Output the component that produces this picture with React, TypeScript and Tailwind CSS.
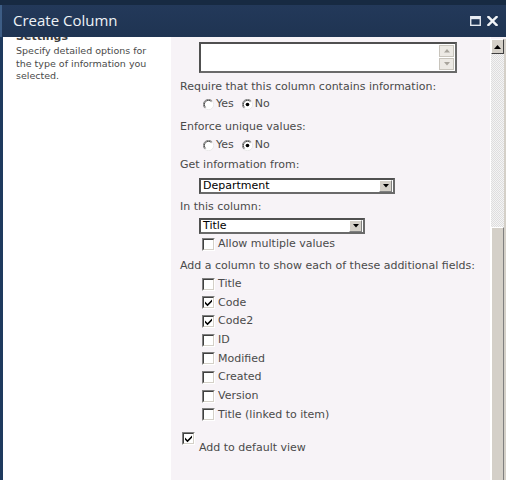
import React from 'react';

const font = "font-['DejaVu_Sans','Liberation_Sans',sans-serif]";

const Radio: React.FC<{ checked?: boolean }> = ({ checked }) => (
  <svg width="11" height="11" viewBox="0 0 12 12" className="shrink-0">
    <circle cx="6" cy="6" r="5.5" fill="#ffffff" />
    <path d="M10 2 A5.5 5.5 0 0 0 2 10" fill="none" stroke="#808080" strokeWidth="1" />
    <path d="M9.2 2.8 A4.5 4.5 0 0 0 2.8 9.2" fill="none" stroke="#404040" strokeWidth="1" />
    <path d="M2 10 A5.5 5.5 0 0 0 10 2" fill="none" stroke="#e8e8e8" strokeWidth="1" />
    {checked && <circle cx="6" cy="6" r="2" fill="#000000" />}
  </svg>
);

const Checkbox: React.FC<{ checked?: boolean }> = ({ checked }) => (
  <div className="w-[13px] h-[13px] shrink-0 border-t border-l border-t-[#808080] border-l-[#808080] border-b border-r border-b-white border-r-white bg-white">
    <div className="w-full h-full border-t border-l border-t-[#404040] border-l-[#404040] border-b border-r border-b-[#d4d0c8] border-r-[#d4d0c8] flex items-center justify-center">
      {checked && (
        <svg width="9" height="9" viewBox="0 0 9 9">
          <path d="M1 3.5 L3.5 6 L8 1.5 L8 3.8 L3.5 8.2 L1 5.7 Z" fill="#000000" />
        </svg>
      )}
    </div>
  </div>
);

const Select: React.FC<{ value: string; width: string }> = ({ value, width }) => (
  <div className={`${width} h-[16px] bg-white border-t-2 border-l-2 border-t-[#505050] border-l-[#505050] border-b-2 border-r-2 border-b-[#6a6a6a] border-r-[#6a6a6a] flex items-center`}>
    <span className="flex-1 pl-[2px] text-[11px] leading-[12px] text-black">{value}</span>
    <div className="w-[13px] h-[12px] mr-px bg-[#d4d0c8] border-t border-l border-t-white border-l-white border-b border-r border-b-[#808080] border-r-[#808080] flex items-center justify-center">
      <svg width="6" height="4" viewBox="0 0 6 4">
        <path d="M0 0 L6 0 L3 3.5 Z" fill="#000000" />
      </svg>
    </div>
  </div>
);

const Label: React.FC<{ children: React.ReactNode; className?: string }> = ({ children, className }) => (
  <div className={`h-[14px] leading-[14px] pl-[9px] text-[11px] text-[#4a4a4a] whitespace-nowrap ${className ?? ''}`}>{children}</div>
);

const CheckRow: React.FC<{ label: string; checked?: boolean }> = ({ label, checked }) => (
  <div className="h-[18.67px] flex items-center pl-[31px] gap-[3px] text-[11px] text-[#4a4a4a]">
    <Checkbox checked={checked} />
    <span>{label}</span>
  </div>
);

const RadioRow: React.FC = () => (
  <div className="h-[14px] flex items-center pl-[32px] text-[11px] text-[#4a4a4a]">
    <Radio />
    <span className="ml-[2px]">Yes</span>
    <span className="ml-[8px] flex"><Radio checked /></span>
    <span className="ml-[2px]">No</span>
  </div>
);

const fields = [
  { label: 'Title' },
  { label: 'Code', checked: true },
  { label: 'Code2', checked: true },
  { label: 'ID' },
  { label: 'Modified' },
  { label: 'Created' },
  { label: 'Version' },
  { label: 'Title (linked to item)' },
];

export default function App() {
  return (
    <div className={`w-[506px] h-[480px] overflow-hidden flex flex-col ${font}`}>
      {/* Title bar */}
      <div className="h-[37px] shrink-0 bg-[#172a42] pt-[5px]">
        <div className="h-[32px] bg-gradient-to-b from-[#23395a] to-[#1f3452] border-l-2 border-[#3d5d85] flex items-center pl-[11px] pr-[8px]">
          <span className="flex-1 text-[15px] text-[#eef2f6] font-['Open_Sans','DejaVu_Sans',sans-serif] pb-[2px]">Create Column</span>
          <div className="flex items-center gap-[6px]">
            <svg width="11" height="10" viewBox="0 0 12 11">
              <rect x="0.75" y="0.75" width="10.5" height="9.5" fill="none" stroke="#e6ebf2" strokeWidth="1.5" />
              <rect x="1" y="1" width="10" height="2.5" fill="#e6ebf2" />
            </svg>
            <svg width="11" height="10" viewBox="0 0 12 11">
              <path d="M1.5 1 L10.5 10 M10.5 1 L1.5 10" stroke="#f2f5f8" strokeWidth="2.6" strokeLinecap="square" />
            </svg>
          </div>
        </div>
      </div>

      {/* Body */}
      <div className="flex-1 flex overflow-hidden border-l-[3px] border-[#1e3a5e]">
        {/* Left description panel */}
        <div className="w-[168px] shrink-0 bg-white pl-[13px] overflow-hidden">
          <div className="-mt-[7px] text-[11px] leading-[14px] font-bold text-[#3c3c3c]">Settings</div>
          <div className="mt-[1px] w-[142px] text-[9.5px] leading-[12.6px] text-[#4a4a4a]">
            Specify detailed options for the type of information you selected.
          </div>
        </div>

        {/* Right form panel */}
        <div className="flex-1 bg-[#f7f3f7] overflow-hidden">
          <div className="mt-[5px] ml-[28px] w-[258px] h-[31px] bg-white border-t-2 border-l-2 border-t-[#505050] border-l-[#505050] border-b-2 border-r-2 border-b-[#6a6a6a] border-r-[#6a6a6a] flex justify-end">
            <div className="w-[15px] flex flex-col gap-[1px] py-[1px] mr-[1px]">
              <div className="flex-1 bg-[#ece9e4] border border-[#c8c4bc] flex items-center justify-center">
                <svg width="6" height="4" viewBox="0 0 6 4"><path d="M0 3.5 L6 3.5 L3 0 Z" fill="#a8a49c" /></svg>
              </div>
              <div className="flex-1 bg-[#ece9e4] border border-[#c8c4bc] flex items-center justify-center">
                <svg width="6" height="4" viewBox="0 0 6 4"><path d="M0 0 L6 0 L3 3.5 Z" fill="#a8a49c" /></svg>
              </div>
            </div>
          </div>

          <Label className="mt-[7px]">Require that this column contains information:</Label>
          <div className="mt-[3px]"><RadioRow /></div>

          <Label className="mt-[9px]">Enforce unique values:</Label>
          <div className="mt-[4px]"><RadioRow /></div>

          <Label className="mt-[6px]">Get information from:</Label>
          <div className="mt-[6px] ml-[28px]"><Select value="Department" width="w-[196px]" /></div>

          <Label className="mt-[6px]">In this column:</Label>
          <div className="mt-[4px] ml-[28px]"><Select value="Title" width="w-[166px]" /></div>

          <div className="mt-[3px] h-[14px] flex items-center pl-[31px] gap-[3px] text-[11px] text-[#4a4a4a]">
            <Checkbox />
            <span>Allow multiple values</span>
          </div>

          <Label className="mt-[8px]">Add a column to show each of these additional fields:</Label>
          <div className="mt-[2px]">
            {fields.map(f => (
              <CheckRow key={f.label} label={f.label} checked={f.checked} />
            ))}
          </div>

          <div className="mt-[8px] ml-[11px] flex items-start gap-[4px] text-[11px] text-[#4a4a4a]">
            <Checkbox checked />
            <span className="mt-[8px]">Add to default view</span>
          </div>
        </div>

        {/* Scrollbar */}
        <div className="w-[16px] shrink-0 flex flex-col border-l border-[#ffffff] bg-[#d4d0c8]">
          <div className="h-[2px] bg-[#f7f3f7]" />
          <div className="h-[15px] mr-[2px] bg-[#d4d0c8] border-t border-l border-t-white border-l-white border-b border-r border-b-[#404040] border-r-[#404040] flex items-center justify-center">
            <svg width="7" height="4" viewBox="0 0 7 4"><path d="M0 4 L7 4 L3.5 0 Z" fill="#000000" /></svg>
          </div>
          <div className="h-[173px] mr-[2px] bg-[image:repeating-conic-gradient(#dedede_0%_25%,#f4f4f4_0%_50%)] bg-[length:2px_2px]" />
          <div className="flex-1 mr-[2px] bg-[#d4d0c8] border-t border-l border-t-white border-l-white border-r border-r-[#808080]" />
        </div>
      </div>
    </div>
  );
}
